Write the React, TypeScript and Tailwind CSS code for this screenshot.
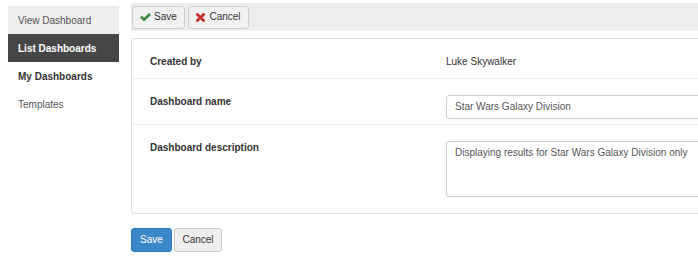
import React from "react";

const CheckIcon = () => (
  <svg width="11" height="9" viewBox="0 0 11 9" className="mr-[3px]">
    <polygon points="0,4.6 1.9,2.7 4,4.8 9.1,0 11,1.9 4,8.6" fill="#3d8b3d" />
  </svg>
);

const TimesIcon = () => (
  <svg width="9" height="9" viewBox="0 0 9 9" className="mr-[4px]">
    <path d="M1.4 1.4 L7.6 7.6 M7.6 1.4 L1.4 7.6" fill="none" stroke="#c9302c" strokeWidth="2.8" strokeLinecap="round" />
  </svg>
);

const navItems = [
  { label: "View Dashboard", cls: "bg-[#eeeeee] text-[#555]" },
  { label: "List Dashboards", cls: "bg-[#464646] text-white font-bold" },
  { label: "My Dashboards", cls: "text-[#333] font-bold" },
  { label: "Templates", cls: "text-[#555]" },
];

export default function App() {
  return (
    <div
      className="w-[698px] h-[260px] overflow-hidden bg-white flex text-[10px] leading-[12px] text-[#333]"
      style={{ fontFamily: '"Liberation Sans", Arial, sans-serif' }}
    >
      {/* sidebar */}
      <div className="w-[111px] ml-[8px] mt-[6px] shrink-0">
        {navItems.map((item) => (
          <div key={item.label} className={`h-[28px] flex items-center pl-[10px] pt-[2px] ${item.cls}`}>
            {item.label}
          </div>
        ))}
      </div>

      <div className="flex-1 min-w-0 ml-[12px] pt-[3px]">
        {/* toolbar */}
        <div className="h-[28px] bg-[#ededed] flex items-center pl-[1px] gap-[3px]">
          <button className="h-[23px] w-[53px] flex items-center justify-center bg-[#f1f1f1] border border-[#cfcfcf] rounded-[3px] text-[#333]">
            <CheckIcon />
            Save
          </button>
          <button className="h-[23px] w-[61px] flex items-center justify-center bg-[#f1f1f1] border border-[#cfcfcf] rounded-[3px] text-[#333]">
            <TimesIcon />
            Cancel
          </button>
        </div>

        {/* form card */}
        <div className="mt-[7px] mr-[-40px] border border-[#dddddd] rounded-[3px] bg-white">
          <div className="flex pt-[17px] pb-[10px] border-b border-[#eeeeee]">
            <div className="w-[314px] pl-[18px] font-bold">Created by</div>
            <div className="flex-1">Luke Skywalker</div>
          </div>
          <div className="flex pt-[16px] pb-[5px] border-b border-[#eeeeee]">
            <div className="w-[314px] pl-[18px] pt-[1px] font-bold">Dashboard name</div>
            <div className="flex-1 pr-[16px]">
              <div className="h-[24px] border border-[#cccccc] rounded-[3px] flex items-center pl-[8px] text-[#555]">
                Star Wars Galaxy Division
              </div>
            </div>
          </div>
          <div className="flex pt-[16px] pb-[16px]">
            <div className="w-[314px] pl-[18px] pt-[1px] font-bold">Dashboard description</div>
            <div className="flex-1 pr-[16px]">
              <div className="h-[56px] border border-[#cccccc] rounded-[3px] pl-[8px] pt-[5px] text-[#555]">
                Displaying results for Star Wars Galaxy Division only
              </div>
            </div>
          </div>
        </div>

        {/* bottom buttons */}
        <div className="flex gap-[2px] mt-[14px]">
          <button className="h-[24px] w-[41px] bg-[#3b88c9] border border-[#2f79b8] rounded-[3px] text-white">
            Save
          </button>
          <button className="h-[24px] w-[48px] bg-[#eeeeee] border border-[#cccccc] rounded-[3px] text-[#333]">
            Cancel
          </button>
        </div>
      </div>
    </div>
  );
}
